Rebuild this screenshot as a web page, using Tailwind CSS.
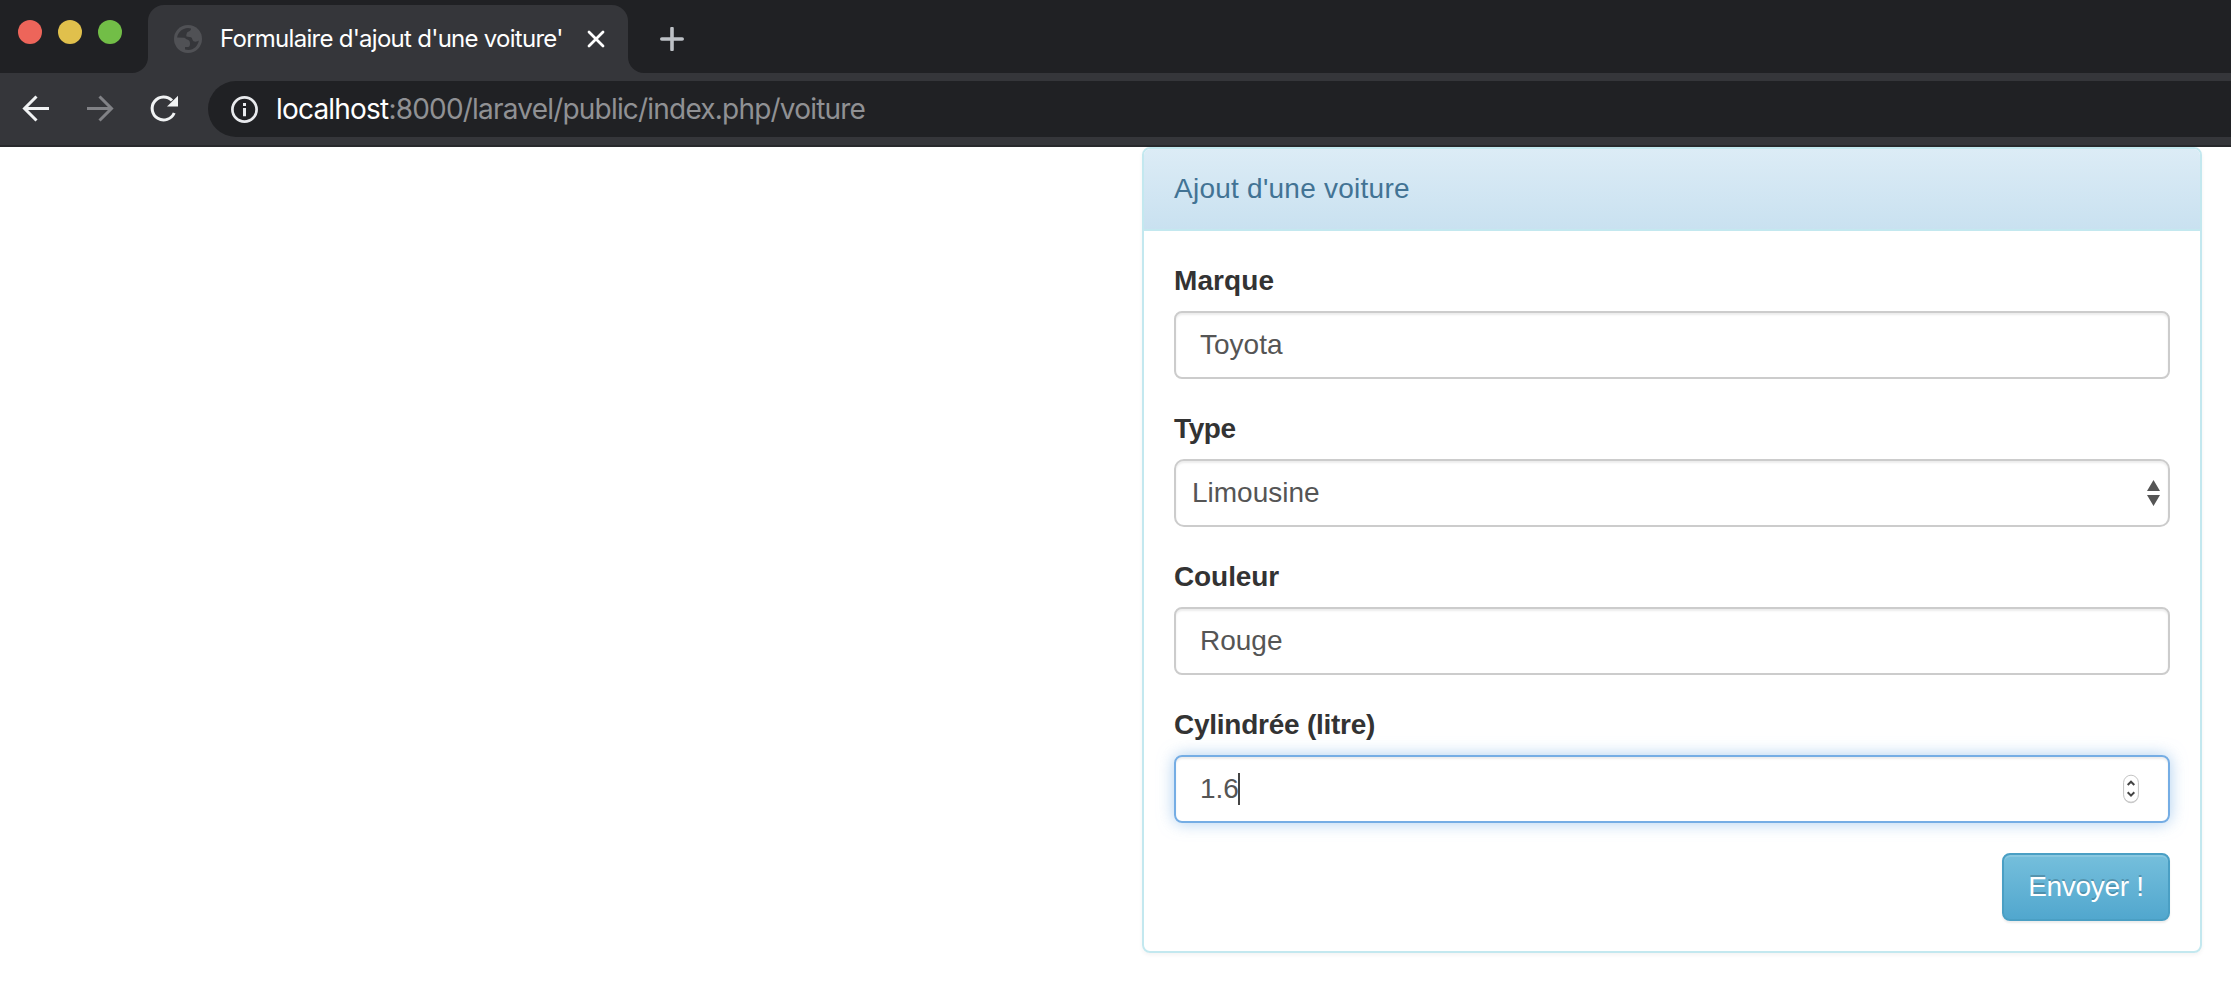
<!DOCTYPE html>
<html lang="fr">
<head>
<meta charset="utf-8">
<title>Formulaire d'ajout d'une voiture</title>
<script src="https://cdn.jsdelivr.net/npm/@tailwindcss/browser@4"></script>
</head>
<body class="w-[2231px] h-[981px] overflow-hidden bg-white font-['Liberation_Sans',Arial,sans-serif] text-[28px] leading-[40px] text-[#333]">
<header class="font-['Inter',sans-serif]">
  <div class="flex h-[73px] bg-[#202124] pt-[5px]">
    <div class="flex w-[148px] shrink-0 gap-4 pl-[18px] pt-[15px]">
      <span class="size-6 rounded-full bg-[#ed655a]"></span>
      <span class="size-6 rounded-full bg-[#e0c04c]"></span>
      <span class="size-6 rounded-full bg-[#72be47]"></span>
    </div>
    <div class="relative flex h-[68px] w-[480px] shrink-0 items-center rounded-t-[16px] bg-[#35363a] pl-[26px]">
      <svg class="absolute bottom-0 -left-4 size-4" viewBox="0 0 16 16"><path d="M16 0V16H0A16 16 0 0 0 16 0Z" fill="#35363a"/></svg>
      <svg class="absolute bottom-0 -right-4 size-4" viewBox="0 0 16 16"><path d="M0 0V16H16A16 16 0 0 1 0 0Z" fill="#35363a"/></svg>
      <svg class="size-7 shrink-0" viewBox="0 0 28 28"><circle cx="14" cy="14" r="14" fill="#505155"/><path d="M3.100 12.500C3.800 7.500 8 3.300 14 3L17 3.500C17.200 5.500 15.500 6.500 13.500 7C12.500 9 12 10 12.500 11.500L17 12.300C18.500 13 18.200 15.300 19.500 16.300C21.500 17.200 23.500 16.500 24.900 15.500C24 20.500 20 25 14.500 25L11 24.500V22H14C15.500 21.800 16 20.500 16 18.500C16 16 14.500 14.500 12.500 14.300L10.500 12.700Z" fill="#35363a"/></svg>
      <span class="ml-[18px] w-[327px] shrink-0 whitespace-nowrap pb-px text-[24px] leading-[30px] tracking-[-0.73px] text-white">Formulaire d'ajout d'une voiture'</span>
      <svg class="ml-[41px] size-4 shrink-0 overflow-visible" viewBox="0 0 16 16"><path d="M1 1L15 15M15 1L1 15" stroke="#fff" stroke-width="2.800" stroke-linecap="round"/></svg>
    </div>
    <svg class="ml-8 mt-[22px] size-6" viewBox="0 0 24 24"><path d="M12 1.500V22.500M1.800 12H22.200" stroke="#bdc1c6" stroke-width="3.600" stroke-linecap="round"/></svg>
  </div>
  <div class="flex h-[74px] items-start border-b-2 border-[#28292c] bg-[#35363a] pt-2">
    <div class="flex h-14 w-[208px] items-center pl-[22px]">
      <svg class="size-[28px] overflow-visible" viewBox="0 0 28 28" fill="none" stroke="#f1f3f4" stroke-width="3"><path d="M27 13.500H3M14.500 1.500L2.500 13.500L14.500 25.500"/></svg>
      <svg class="ml-9 size-[28px] overflow-visible" viewBox="0 0 28 28" fill="none" stroke="#818286" stroke-width="3"><path d="M1 13.500H25M13.500 1.500L25.500 13.500L13.500 25.500"/></svg>
      <svg class="ml-9 size-[28px] overflow-visible" viewBox="0 0 28 28"><path d="M24.200 18A11.500 11.500 0 1 1 22 5.500" fill="none" stroke="#f1f3f4" stroke-width="3"/><path d="M28 .7V11.500H17Z" fill="#f1f3f4"/></svg>
    </div>
    <div class="flex h-14 flex-1 items-center rounded-l-full bg-[#202124] pl-[23px]">
      <svg class="size-[27px] shrink-0" viewBox="0 0 27 27"><circle cx="13.500" cy="13.500" r="12.100" fill="none" stroke="#e8eaed" stroke-width="2.700"/><path d="M12 7H15V10H12ZM12 12H15V20.200H12Z" fill="#e8eaed"/></svg>
      <div class="ml-[18px] whitespace-nowrap text-[28px] leading-[40px] tracking-[-0.8px] text-[#909194]"><span class="text-white">localhost</span>:8000/laravel/public/index.php/voiture</div>
    </div>
  </div>
</header>
<main class="flex justify-end pr-[29px]">
  <section class="w-[1060px] rounded-[8px] border-2 border-[#c3e8ef] shadow-[0_2px_4px_rgba(0,0,0,0.05)]">
    <div class="h-[82px] rounded-t-[6px] border-b-2 border-[#c3e8ef] bg-linear-to-b from-[#dcecf6] to-[#c9e1f0] px-[30px] py-5 tracking-[0.25px] text-[#427394]">Ajout d'une voiture</div>
    <form class="flex flex-col p-[30px]">
      <div class="mb-[30px]">
        <div class="mb-[10px] font-bold tracking-[0.1px]">Marque</div>
        <div class="flex h-[68px] items-center rounded-[8px] border-2 border-[#ccc] pl-6 text-[#555] shadow-[inset_0_2px_2px_rgba(0,0,0,0.075)]">Toyota</div>
      </div>
      <div class="mb-[30px]">
        <div class="mb-[10px] font-bold tracking-[-0.4px]">Type</div>
        <div class="flex h-[68px] items-center justify-between rounded-[10px] border-2 border-[#ccc] pl-4 pr-2 text-[#555] shadow-[inset_0_2px_2px_rgba(0,0,0,0.075)]">Limousine
          <svg class="h-[26px] w-[13px]" viewBox="0 0 13 26"><path d="M6.500 0L13 11H0ZM0 15H13L6.500 26Z" fill="#555"/></svg>
        </div>
      </div>
      <div class="mb-[30px]">
        <div class="mb-[10px] font-bold tracking-[-0.1px]">Couleur</div>
        <div class="flex h-[68px] items-center rounded-[8px] border-2 border-[#ccc] pl-6 text-[#555] shadow-[inset_0_2px_2px_rgba(0,0,0,0.075)]">Rouge</div>
      </div>
      <div class="mb-[30px]">
        <div class="mb-[10px] font-bold tracking-[-0.25px]">Cylindrée (litre)</div>
        <div class="flex h-[68px] items-center rounded-[8px] border-2 border-[#75ade4] pl-6 pr-[29px] text-[#555] shadow-[inset_0_2px_2px_rgba(0,0,0,0.075),0_0_16px_rgba(117,173,228,0.6)]">1.6<span class="-ml-px h-8 w-0.5 bg-[#444]"></span>
          <svg class="ml-auto h-[30px] w-4 overflow-visible" viewBox="0 0 16 30"><rect x=".6" y="2.200" width="14.800" height="27" rx="7.400" fill="#aaa" opacity=".6"/><rect x=".6" y="1.200" width="14.800" height="27" rx="7.400" fill="#fff" stroke="#c4c4c4" stroke-width="1"/><path d="M4.700 11L8 7.700L11.300 11M4.700 18.300L8 21.600L11.300 18.300" fill="none" stroke="#444" stroke-width="2"/></svg>
        </div>
      </div>
      <div class="flex h-[68px] w-[168px] items-center justify-center self-end rounded-[8px] border-2 border-[#4a9fc4] bg-linear-to-b from-[#75bfdc] to-[#51a7ce] tracking-[-0.3px] text-white shadow-[inset_0_2px_0_rgba(255,255,255,0.15),0_2px_2px_rgba(0,0,0,0.075)] [text-shadow:0_-2px_0_rgba(0,0,0,0.2)]">Envoyer !</div>
    </form>
  </section>
</main>
</body>
</html>
